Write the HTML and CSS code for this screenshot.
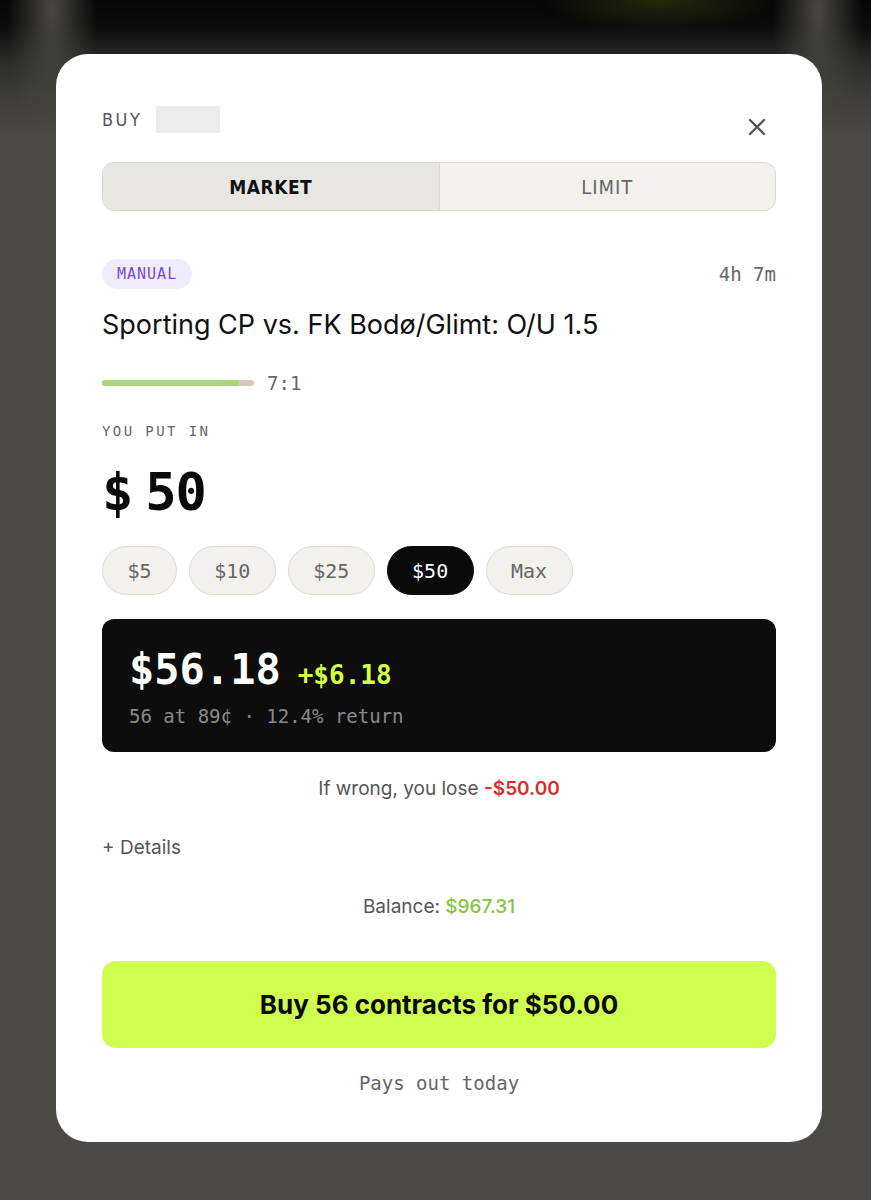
FILE: index.html
```html
<!DOCTYPE html>
<html lang="en">

<head>
    <meta charset="UTF-8">
    <meta name="viewport" content="width=device-width, initial-scale=1.0">
    <title>Buy</title>
    <link rel="stylesheet" href="styles.css">
</head>

<body>
    <div class="modal">
        <div class="head">
            <div class="buy-label">
                <span>BUY</span>
                <span class="ticker"></span>
            </div>
            <button class="close" aria-label="Close">
                <svg width="18" height="18" viewBox="0 0 18 18">
                    <path d="M2 2 L16 16 M16 2 L2 16" stroke="#555" stroke-width="2.4" stroke-linecap="round" fill="none" />
                </svg>
            </button>
        </div>

        <div class="tabs">
            <div class="tab active">MARKET</div>
            <div class="tab">LIMIT</div>
        </div>

        <div class="meta">
            <span class="badge">MANUAL</span>
            <span class="time">4h 7m</span>
        </div>

        <h1 class="title">Sporting CP vs. FK Bodø/Glimt: O/U 1.5</h1>

        <div class="ratio">
            <div class="bar"><div class="bar-fill" style="width: 90%"></div></div>
            <span>7:1</span>
        </div>

        <div class="label">YOU PUT IN</div>
        <div class="amount"><span class="cur">$</span>50</div>

        <div class="chips">
            <button class="chip">$5</button>
            <button class="chip">$10</button>
            <button class="chip">$25</button>
            <button class="chip active">$50</button>
            <button class="chip">Max</button>
        </div>

        <div class="payout">
            <div class="payout-main">
                <span class="payout-total">$56.18</span>
                <span class="payout-gain">+$6.18</span>
            </div>
            <div class="payout-sub">56 at 89¢ · 12.4% return</div>
        </div>

        <p class="lose">If wrong, you lose <b>-$50.00</b></p>

        <div class="details">+ Details</div>

        <p class="balance">Balance: <span>$967.31</span></p>

        <button class="buy-btn">Buy 56 contracts for $50.00</button>

        <p class="pays">Pays out today</p>
    </div>
</body>

</html>
```

FILE: styles.css
```css
* {
    margin: 0;
    padding: 0;
    box-sizing: border-box;
}

body {
    width: 871px;
    height: 1200px;
    padding: 54px 49px 0 56px;
    background-color: #4b4a46;
    background-image:
        radial-gradient(ellipse 120px 30px at 660px 0, rgba(90, 110, 20, 0.35), rgba(0, 0, 0, 0)),
        radial-gradient(ellipse 45px 140px at 52px 10px, rgba(75, 74, 70, 0.95), rgba(75, 74, 70, 0)),
        radial-gradient(ellipse 45px 140px at 818px 10px, rgba(75, 74, 70, 0.95), rgba(75, 74, 70, 0)),
        linear-gradient(180deg, #060606 0, #0b0b0b 25px, #2a2a28 60px, #3f3e3b 100px, #4b4a46 140px, #4b4a46 100%);
    font-family: "Inter", "Noto Sans", sans-serif;
    overflow: hidden;
}

.modal {
    width: 766px;
    height: 1088px;
    background: #fff;
    border-radius: 32px;
    padding: 52px 46px 48px;
    display: flex;
    flex-direction: column;
}

.badge,
.time,
.ratio span,
.label,
.amount,
.chip,
.payout,
.pays {
    font-family: "DejaVu Sans Mono", monospace;
}

.buy-label,
.tab {
    font-family: "DejaVu Sans Condensed", "DejaVu Sans", sans-serif;
    font-stretch: condensed;
}

.head {
    display: flex;
    justify-content: space-between;
    align-items: flex-end;
    height: 27px;
}

.buy-label {
    display: flex;
    align-items: center;
    gap: 14px;
    font-size: 18px;
    letter-spacing: 2.5px;
    color: #555;
    height: 27px;
}

.ticker {
    width: 64px;
    height: 27px;
    background: #ececec;
    border-radius: 2px;
}

.close {
    border: none;
    background: none;
    width: 18px;
    height: 18px;
    margin-right: 10px;
    margin-bottom: -3px;
}

.tabs {
    margin-top: 29px;
    height: 49px;
    display: flex;
    border: 1px solid #d9d8d4;
    border-radius: 12px;
    overflow: hidden;
    background: #f2f1ee;
}

.tab {
    flex: 1;
    display: flex;
    align-items: center;
    justify-content: center;
    font-size: 20px;
    letter-spacing: 1px;
    color: #666;
}

.tab.active {
    background: #e7e6e3;
    color: #111;
    font-weight: bold;
    font-size: 19px;
    letter-spacing: 0.5px;
    border-right: 1px solid #d9d8d4;
}

.meta {
    margin-top: 48px;
    display: flex;
    justify-content: space-between;
    align-items: center;
}

.badge {
    height: 30px;
    padding: 0 15px;
    border-radius: 15px;
    background: #f1ecfd;
    color: #7449d6;
    font-size: 15px;
    letter-spacing: 1px;
    display: flex;
    align-items: center;
}

.time {
    font-size: 19px;
    color: #666;
}

.title {
    margin-top: 19px;
    font-size: 27px;
    line-height: 34px;
    font-weight: 400;
    color: #111;
}

.ratio {
    margin-top: 31px;
    display: flex;
    align-items: center;
    gap: 13px;
    height: 20px;
}

.bar {
    width: 152px;
    height: 6px;
    border-radius: 3px;
    background: #d9c6bc;
    overflow: hidden;
}

.bar-fill {
    height: 100%;
    background: #a9d67c;
}

.ratio span {
    font-size: 19px;
    color: #666;
}

.label {
    margin-top: 30px;
    font-size: 14px;
    line-height: 16px;
    letter-spacing: 2.4px;
    color: #666;
}

.amount {
    margin-top: 23px;
    font-size: 52px;
    line-height: 60px;
    font-weight: bold;
    color: #0a0a0a;
    letter-spacing: -1px;
}

.cur {
    margin-right: 13px;
}

.chips {
    margin-top: 24px;
    display: flex;
    gap: 12px;
}

.chip {
    height: 49px;
    padding: 0 24.4px;
    border-radius: 25px;
    border: 1px solid #dad9d5;
    background: #f2f1ee;
    color: #666;
    font-size: 20px;
}

.chip.active {
    background: #0a0a0a;
    border-color: #0a0a0a;
    color: #fff;
}

.payout {
    margin-top: 24px;
    height: 133px;
    border-radius: 12px;
    background: #0d0d0d;
    padding: 26px 27px 0;
}

.payout-main {
    display: flex;
    align-items: baseline;
    gap: 17px;
}

.payout-total {
    font-size: 42px;
    line-height: 50px;
    font-weight: bold;
    color: #fff;
}

.payout-gain {
    font-size: 26px;
    font-weight: bold;
    color: #d2ff45;
}

.payout-sub {
    margin-top: 10px;
    font-size: 19px;
    color: #8a8a8a;
}

.lose {
    margin-top: 25px;
    text-align: center;
    font-size: 19px;
    line-height: 24px;
    color: #555;
}

.lose b {
    color: #d42e27;
    font-weight: 600;
}

.details {
    margin-top: 35px;
    font-size: 19px;
    line-height: 24px;
    color: #555;
}

.balance {
    margin-top: 35px;
    text-align: center;
    font-size: 19px;
    line-height: 24px;
    color: #555;
}

.balance span {
    color: #86c440;
    font-weight: 500;
}

.buy-btn {
    margin-top: 42px;
    height: 87px;
    border: none;
    border-radius: 14px;
    background: #cffd50;
    color: #0a0a0a;
    font-family: "Inter", "Noto Sans", sans-serif;
    font-size: 26px;
    font-weight: 700;
}

.pays {
    margin-top: 24px;
    text-align: center;
    font-size: 19px;
    line-height: 22px;
    color: #666;
}
```
